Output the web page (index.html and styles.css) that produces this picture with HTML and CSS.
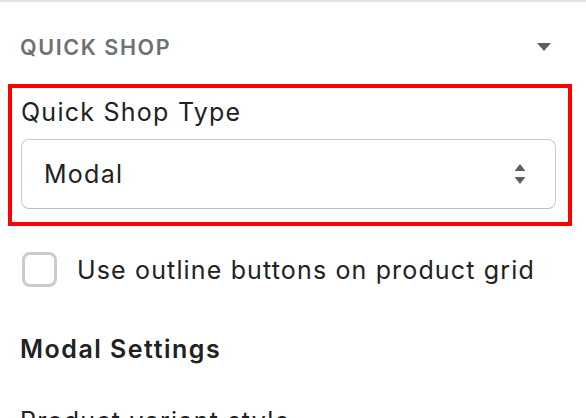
FILE: index.html
```html
<!DOCTYPE html>
<html>
<head>
<meta charset="utf-8">
<link rel="stylesheet" href="styles.css">
</head>
<body>
<div class="panel">
  <div class="section-header">
    <span class="section-title">QUICK SHOP</span>
    <svg class="caret" width="16" height="10" viewBox="0 0 16 10"><path d="M1 1h14l-7 8z" fill="#5c5f62"/></svg>
  </div>
  <div class="highlight">
    <label class="field-label">Quick Shop Type</label>
    <div class="select">
      <span class="select-value">Modal</span>
      <svg class="select-arrows" width="12" height="22" viewBox="0 0 12 22"><path d="M6 1l5.5 7h-11z M6 21l5.5-7h-11z" fill="#5c5f62"/></svg>
    </div>
  </div>
  <div class="checkbox-row">
    <span class="checkbox"></span>
    <span class="checkbox-label">Use outline buttons on product grid</span>
  </div>
  <div class="subheading">Modal Settings</div>
  <div class="field-label next">Product variant style</div>
</div>
</body>
</html>
```
FILE: styles.css
```css
html, body {
  margin: 0;
  padding: 0;
  background: #ffffff;
}
body {
  font-family: Inter, "Noto Sans", "Liberation Sans", sans-serif;
  color: #202223;
  border-top: 2px solid #e1e3e5;
  height: 416px;
  overflow: hidden;
}
.panel {
  display: flex;
  flex-direction: column;
}
.section-header {
  display: flex;
  align-items: center;
  justify-content: space-between;
  padding: 6px 34px 0 20px;
  height: 82px;
  margin-top: -2px;
}
.section-title {
  font-size: 21.5px;
  font-weight: 600;
  color: #6d7175;
  letter-spacing: 1.6px;
}
.caret {
  display: block;
}
.highlight {
  margin: -4px 14px 0 8px;
  border: 4px solid #ff0000;
  padding: 8px 12px 13px 9px;
  display: flex;
  flex-direction: column;
}
.field-label {
  font-size: 25px;
  line-height: 32px;
  letter-spacing: 1.25px;
  color: #202223;
}
.select {
  margin-top: 11px;
  height: 70px;
  box-sizing: border-box;
  border: 1.5px solid #c9cccf;
  border-bottom-color: #babfc3;
  border-radius: 8px;
  display: flex;
  align-items: center;
  justify-content: space-between;
  padding: 0 29px 0 22px;
}
.select-value {
  font-size: 25px;
  letter-spacing: 1.25px;
}
.checkbox-row {
  display: flex;
  align-items: center;
  margin: 26px 0 0 22px;
  gap: 20px;
}
.checkbox {
  width: 35px;
  height: 35px;
  box-sizing: border-box;
  border: 3px solid #c9cccf;
  border-radius: 8px;
  flex: none;
}
.checkbox-label {
  font-size: 25px;
  letter-spacing: 1.15px;
  white-space: nowrap;
}
.subheading {
  margin: 47px 0 0 20px;
  font-size: 25px;
  font-weight: 600;
  letter-spacing: 1.5px;
}
.next {
  margin: 41px 0 0 20px;
  white-space: nowrap;
}
```
